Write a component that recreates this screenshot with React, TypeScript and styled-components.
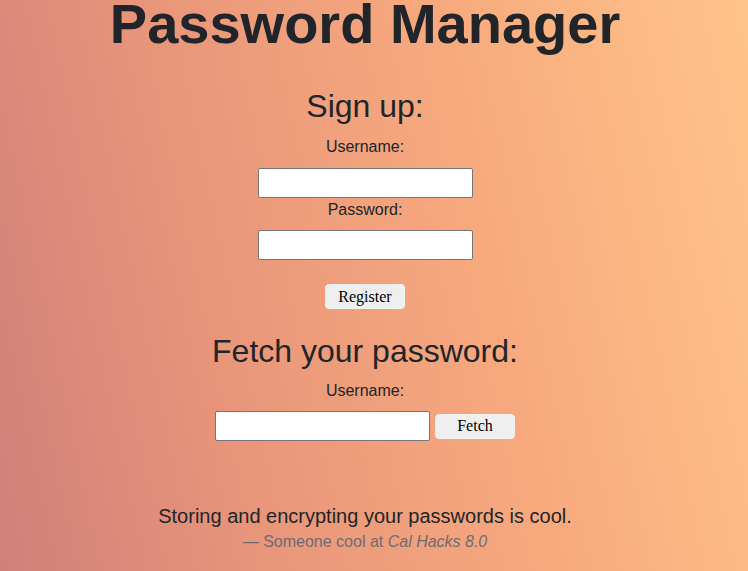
import React from "react";
import styled, { createGlobalStyle } from "styled-components";

const Global = createGlobalStyle`
  html, body { margin: 0; padding: 0; }
  body {
    font-family: "Liberation Sans", Arial, sans-serif;
    color: #212529;
    background: linear-gradient(78deg, #d17f7a 0%, #e8957a 30%, #f8aa7e 65%, #ffc48a 100%);
    min-height: 100vh;
    overflow: hidden;
  }
  #root { min-height: 100vh; }
`;

const Page = styled.main`
  width: 730px;
  min-height: 571px;
  display: flex;
  flex-direction: column;
  align-items: center;
`;

const Title = styled.h1`
  margin: 0;
  font-size: 56px;
  font-weight: 700;
  line-height: 48px;
`;

const Heading = styled.h2<{ $top: number }>`
  margin: ${(p) => p.$top}px 0 0;
  font-size: 32px;
  font-weight: 400;
  line-height: 38.4px;
`;

const Form = styled.form`
  display: flex;
  flex-direction: column;
  align-items: center;
`;

const Label = styled.label<{ $top: number }>`
  margin-top: ${(p) => p.$top}px;
  font-size: 16px;
  line-height: 24px;
`;

const TextInput = styled.input`
  box-sizing: border-box;
  width: 215px;
  height: 30px;
  margin-top: 8.5px;
  border: 1px solid #767676;
  border-radius: 2px;
  background: #fff;
  padding: 1px 2px;
  font-size: 16px;
`;

const Button = styled.button<{ $top?: number }>`
  box-sizing: border-box;
  width: 80px;
  height: 25px;
  margin-top: ${(p) => p.$top ?? 0}px;
  border: 1px solid #f3f3f3;
  border-radius: 4px;
  background: #efefef;
  color: #000;
  font-family: "Liberation Serif", "Times New Roman", serif;
  font-size: 16px;
  padding: 0;
`;

const Row = styled.div`
  display: flex;
  align-items: center;
  gap: 5px;
  margin-top: 8.5px;
  & > input { margin-top: 0; }
`;

const Quote = styled.figure`
  margin: 60px 0 0;
  text-align: center;
`;

const QuoteText = styled.blockquote`
  margin: 0;
  font-size: 20px;
  line-height: 30px;
`;

const Caption = styled.figcaption`
  margin-top: -1.5px;
  font-size: 16px;
  line-height: 24px;
  color: #6c6d72;
  & cite { font-style: italic; }
`;

export default function App() {
  return (
    <>
      <Global />
      <Page>
        <Title>Password Manager</Title>
        <Heading $top={39}>Sign up:</Heading>
        <Form onSubmit={(e) => e.preventDefault()}>
          <Label $top={10}>Username:</Label>
          <TextInput type="text" />
          <Label $top={0}>Password:</Label>
          <TextInput type="password" />
          <Button $top={24}>Register</Button>
        </Form>
        <Heading $top={23}>Fetch your password:</Heading>
        <Form onSubmit={(e) => e.preventDefault()}>
          <Label $top={8}>Username:</Label>
          <Row>
            <TextInput type="text" />
            <Button>Fetch</Button>
          </Row>
        </Form>
        <Quote>
          <QuoteText>Storing and encrypting your passwords is cool.</QuoteText>
          <Caption>
            — Someone cool at <cite>Cal Hacks 8.0</cite>
          </Caption>
        </Quote>
      </Page>
    </>
  );
}
